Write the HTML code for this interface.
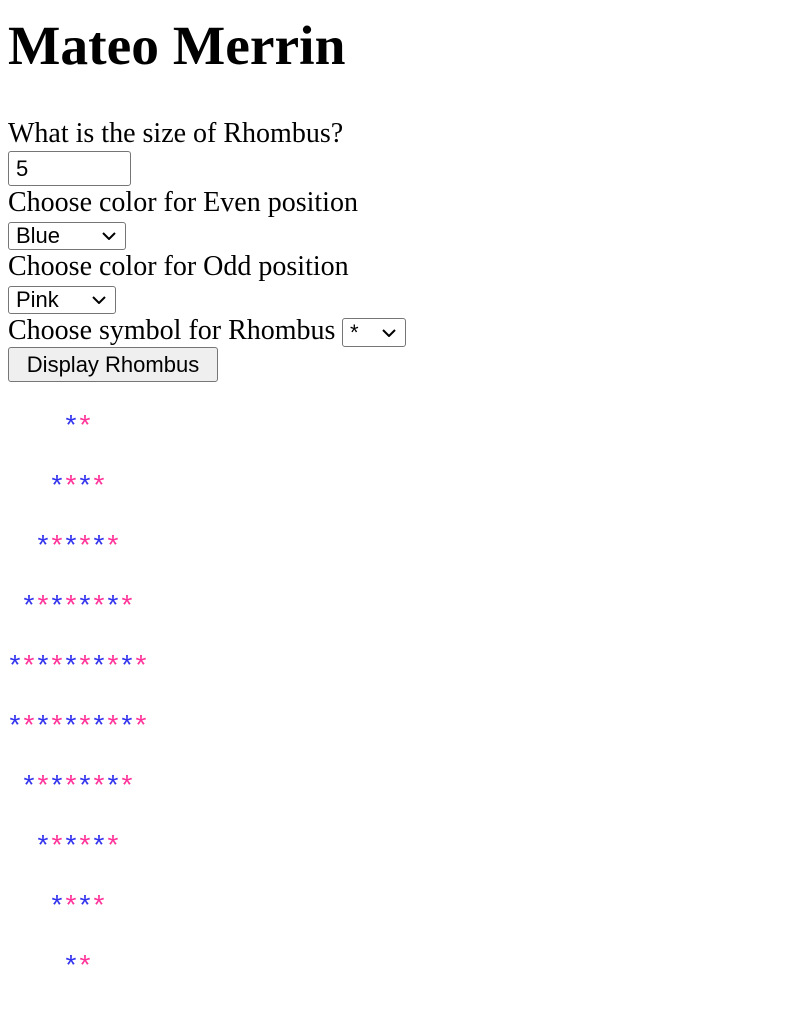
<!DOCTYPE html>
<html><head><meta charset="utf-8"><style>
body{margin:0;background:#fff;font-family:"Liberation Serif",serif;color:#000}
.a{position:absolute;white-space:nowrap}
h1{position:absolute;left:8px;top:16px;margin:0;font-size:55.5px;line-height:62px;font-weight:bold}
.l{font-size:28px;line-height:30px;left:8px}
.c{position:absolute;box-sizing:border-box;border:1px solid #767676;border-radius:3px;background:#fff;font-family:"Liberation Sans",sans-serif;font-size:22px;color:#000;padding-left:7px}
.sel svg{position:absolute;right:9px;top:50%;margin-top:-4px}
.btn{background:#efefef;text-align:center;padding:0}
.r{position:absolute;left:8px;font-family:"Liberation Sans",sans-serif;font-size:28px;line-height:28px;height:28px}
.r span{display:inline-block;width:14px;text-align:center}
.b{color:#3333ee}.p{color:#ff3399}
</style></head><body>
<h1>Mateo Merrin</h1>
<div class="a l" style="top:119px">What is the size of Rhombus?</div>
<div class="c" style="left:8px;top:151px;width:123px;height:35px;line-height:33px">5</div>
<div class="a l" style="top:188px">Choose color for Even position</div>
<div class="c sel" style="left:8px;top:222px;width:118px;height:28px;line-height:26px">Blue<svg width="14" height="8"><path d="M1 1L7 7L13 1" fill="none" stroke="#000" stroke-width="2"/></svg></div>
<div class="a l" style="top:252px">Choose color for Odd position</div>
<div class="c sel" style="left:8px;top:286px;width:108px;height:28px;line-height:26px">Pink<svg width="14" height="8"><path d="M1 1L7 7L13 1" fill="none" stroke="#000" stroke-width="2"/></svg></div>
<div class="a l" style="top:316px">Choose symbol for Rhombus</div>
<div class="c sel" style="left:342px;top:318px;width:64px;height:29px;line-height:27px">*<svg width="14" height="8"><path d="M1 1L7 7L13 1" fill="none" stroke="#000" stroke-width="2"/></svg></div>
<div class="c btn" style="left:8px;top:347px;width:210px;height:35px;line-height:33px">Display Rhombus</div>
<div class="r" style="top:411px;left:64px"><span class="b">*</span><span class="p">*</span></div>
<div class="r" style="top:471px;left:50px"><span class="b">*</span><span class="p">*</span><span class="b">*</span><span class="p">*</span></div>
<div class="r" style="top:531px;left:36px"><span class="b">*</span><span class="p">*</span><span class="b">*</span><span class="p">*</span><span class="b">*</span><span class="p">*</span></div>
<div class="r" style="top:591px;left:22px"><span class="b">*</span><span class="p">*</span><span class="b">*</span><span class="p">*</span><span class="b">*</span><span class="p">*</span><span class="b">*</span><span class="p">*</span></div>
<div class="r" style="top:651px;left:8px"><span class="b">*</span><span class="p">*</span><span class="b">*</span><span class="p">*</span><span class="b">*</span><span class="p">*</span><span class="b">*</span><span class="p">*</span><span class="b">*</span><span class="p">*</span></div>
<div class="r" style="top:711px;left:8px"><span class="b">*</span><span class="p">*</span><span class="b">*</span><span class="p">*</span><span class="b">*</span><span class="p">*</span><span class="b">*</span><span class="p">*</span><span class="b">*</span><span class="p">*</span></div>
<div class="r" style="top:771px;left:22px"><span class="b">*</span><span class="p">*</span><span class="b">*</span><span class="p">*</span><span class="b">*</span><span class="p">*</span><span class="b">*</span><span class="p">*</span></div>
<div class="r" style="top:831px;left:36px"><span class="b">*</span><span class="p">*</span><span class="b">*</span><span class="p">*</span><span class="b">*</span><span class="p">*</span></div>
<div class="r" style="top:891px;left:50px"><span class="b">*</span><span class="p">*</span><span class="b">*</span><span class="p">*</span></div>
<div class="r" style="top:951px;left:64px"><span class="b">*</span><span class="p">*</span></div>
</body></html>
